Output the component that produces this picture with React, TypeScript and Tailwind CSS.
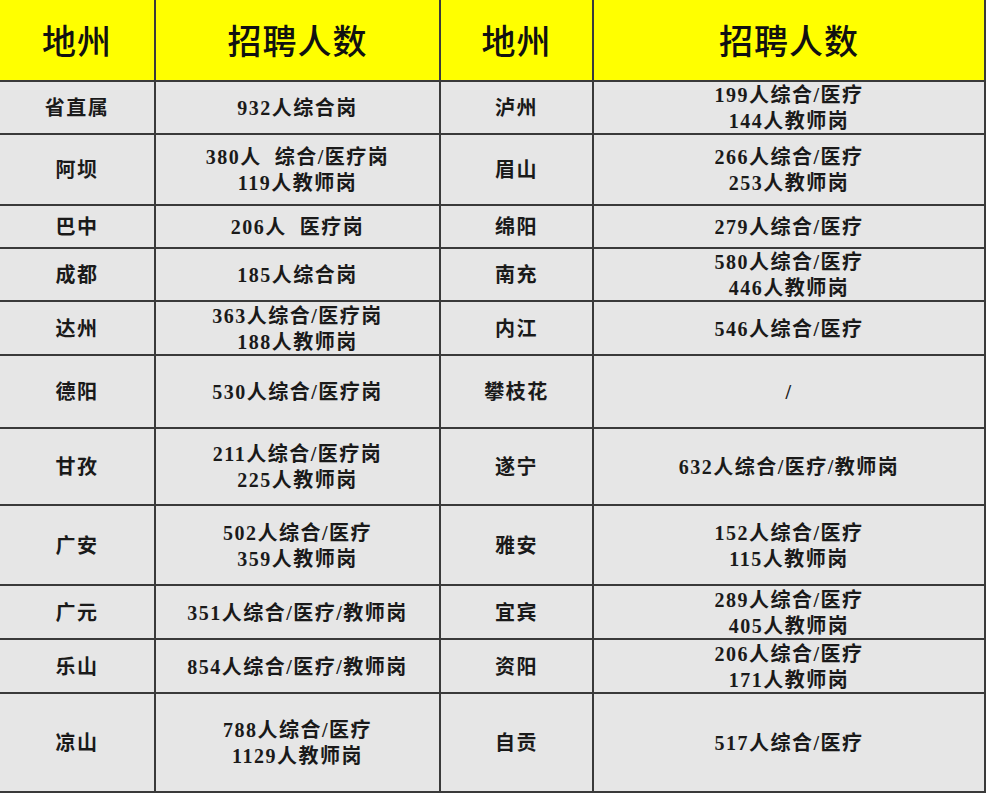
import React from "react";

const rows: [string, string[], string, string[]][] = [
  ["省直属", ["932人综合岗"], "泸州", ["199人综合/医疗", "144人教师岗"]],
  ["阿坝", ["380人  综合/医疗岗", "119人教师岗"], "眉山", ["266人综合/医疗", "253人教师岗"]],
  ["巴中", ["206人  医疗岗"], "绵阳", ["279人综合/医疗"]],
  ["成都", ["185人综合岗"], "南充", ["580人综合/医疗", "446人教师岗"]],
  ["达州", ["363人综合/医疗岗", "188人教师岗"], "内江", ["546人综合/医疗"]],
  ["德阳", ["530人综合/医疗岗"], "攀枝花", ["/"]],
  ["甘孜", ["211人综合/医疗岗", "225人教师岗"], "遂宁", ["632人综合/医疗/教师岗"]],
  ["广安", ["502人综合/医疗", "359人教师岗"], "雅安", ["152人综合/医疗", "115人教师岗"]],
  ["广元", ["351人综合/医疗/教师岗"], "宜宾", ["289人综合/医疗", "405人教师岗"]],
  ["乐山", ["854人综合/医疗/教师岗"], "资阳", ["206人综合/医疗", "171人教师岗"]],
  ["凉山", ["788人综合/医疗", "1129人教师岗"], "自贡", ["517人综合/医疗"]],
];

const font = { fontFamily: '"Liberation Serif", "Noto Sans CJK SC", serif' };

function Head({ text }: { text: string }) {
  return (
    <div className="bg-[#ffff00] flex items-center justify-center pt-[4px] text-[34px] font-medium text-[#111] tracking-[1px]">
      {text}
    </div>
  );
}

function Cell({ lines }: { lines: string[] }) {
  return (
    <div className="bg-[#e6e6e6] flex flex-col items-center justify-center pt-[1px] text-[20px] leading-[26px] font-semibold text-[#1a1a1a] whitespace-pre tracking-[1.5px]">
      {lines.map((l, i) => (
        <div key={i}>{l}</div>
      ))}
    </div>
  );
}

export default function App() {
  return (
    <div className="w-[986px] h-[800px] bg-white" style={font}>
      <div className="grid grid-cols-[154px_283px_151px_390px] grid-rows-[80px_51px_69px_41px_51px_52px_71px_75px_78px_52px_52px_97px] gap-[2px] bg-[#3a3a3a] pr-[2px] pb-[2px] w-[986px]">
        <Head text="地州" />
        <Head text="招聘人数" />
        <Head text="地州" />
        <Head text="招聘人数" />
        {rows.map((r, i) => (
          <React.Fragment key={i}>
            <Cell lines={[r[0]]} />
            <Cell lines={r[1]} />
            <Cell lines={[r[2]]} />
            <Cell lines={r[3]} />
          </React.Fragment>
        ))}
      </div>
    </div>
  );
}
